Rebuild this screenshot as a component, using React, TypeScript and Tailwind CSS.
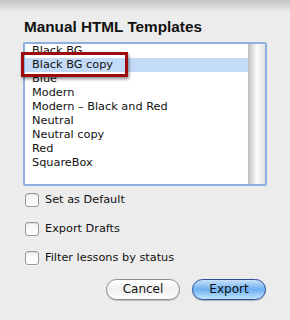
import React from 'react';

const templates = [
  'Black BG',
  'Black BG copy',
  'Blue',
  'Modern',
  'Modern – Black and Red',
  'Neutral',
  'Neutral copy',
  'Red',
  'SquareBox',
];

const options = ['Set as Default', 'Export Drafts', 'Filter lessons by status'];

const App: React.FC = () => {
  return (
    <div className="w-[290px] h-[320px] bg-[#ececec] overflow-hidden relative font-['DejaVu_Sans',sans-serif] text-[#111]">
      {/* window shadow at top */}
      <div className="absolute left-0 top-0 w-full h-[12px] bg-gradient-to-b from-[#c4c4c4] to-[#ececec]" />

      <div className="relative pt-[18px] px-[23px]">
        <h1 className="font-['Liberation_Sans',sans-serif] text-[15.3px] font-bold leading-[18px] pl-[1px]">
          Manual HTML Templates
        </h1>

        <div className="relative mt-[6px] w-[244px] h-[144px] border-2 border-[#8cb0df] rounded-[2px] bg-white flex overflow-hidden">
          <div className="flex-1">
            {templates.map((t, i) => (
              <div
                key={t}
                className={`h-[14px] leading-[14px] text-[11.3px] pl-[7px] ${i === 1 ? 'bg-[#c4dbf7]' : ''}`}
              >
                {t}
              </div>
            ))}
          </div>
          <div className="w-[17px] h-full bg-gradient-to-r from-[#bdbdbd] via-[#fafafa] to-[#e4e4e4]" />
        </div>

        <div className="mt-[7px] flex flex-col gap-[15px]">
          {options.map((o) => (
            <label key={o} className="flex items-center gap-[6px] h-[14px] pl-[2px] text-[11.3px]">
              <span className="w-[14px] h-[14px] rounded-[3px] border border-[#9a9a9a] bg-gradient-to-b from-[#f4f4f4] to-white shadow-[inset_0_1px_1px_rgba(0,0,0,0.1)]" />
              {o}
            </label>
          ))}
        </div>

        <div className="mt-[14px] flex justify-end gap-[12px] pr-[1px]">
          <button className="w-[74px] h-[21px] rounded-full border border-[#8c8c8c] bg-gradient-to-b from-white via-[#f0f0f0] to-[#fcfcfc] text-[12px] leading-[19px] shadow-[0_1px_1px_rgba(0,0,0,0.2)]">
            Cancel
          </button>
          <button className="w-[74px] h-[21px] rounded-full border border-[#2b4d9c] bg-gradient-to-b from-[#c8e1fa] via-[#6cb0ef] to-[#bfe4ff] text-[12px] leading-[19px] shadow-[0_1px_1px_rgba(0,0,0,0.25)]">
            Export
          </button>
        </div>
      </div>

      {/* callout around selected row */}
      <div className="absolute left-[21px] top-[52px] w-[107px] h-[25px] border-[3px] border-[#9e0b0f] shadow-[1px_2px_3px_rgba(0,0,0,0.45)]" />
    </div>
  );
};

export default App;
